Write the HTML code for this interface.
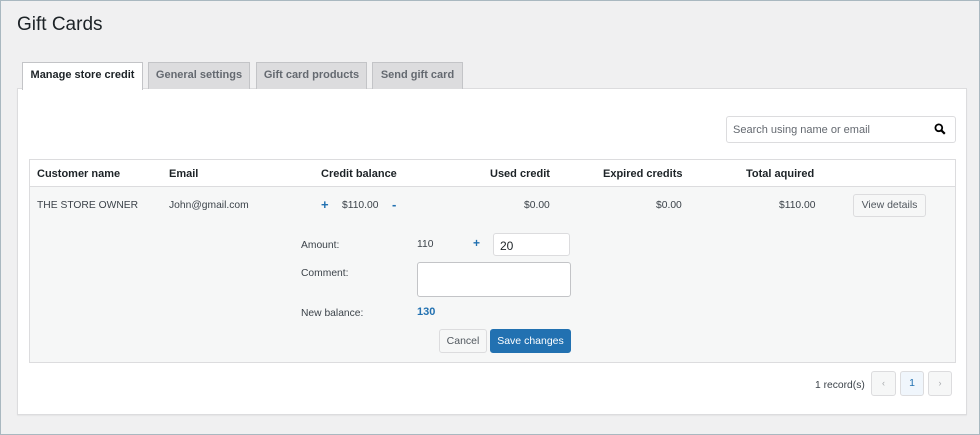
<!DOCTYPE html>
<html><head><style>
*{box-sizing:border-box;margin:0;padding:0}
body{width:980px;height:435px;background:#f0f0f1;font-family:"Liberation Sans",sans-serif;color:#3c434a;position:relative;overflow:hidden}
.a{position:absolute}
h1{position:absolute;left:17px;top:14px;font-size:19px;font-weight:400;color:#1d2327}
.tab{position:absolute;top:62px;height:27px;border:1px solid #c3c4c7;border-bottom:none;background:#dcdcde;font-size:11px;font-weight:bold;color:#646970;text-align:center;line-height:25px}
.panel{position:absolute;left:17px;top:88px;width:950px;height:327px;background:#fff;border:1px solid #dcdcde;box-shadow:0 1px 1px rgba(0,0,0,.05)}
.t{font-size:10.3px;color:#3c434a;margin-top:2px}
.th{font-size:11px;font-weight:bold;color:#1d2327;margin-top:1px}
.btn{position:absolute;border:1px solid #dcdcde;border-radius:3px;background:#f6f7f7;font-size:10.5px;color:#50575e;text-align:center}
</style></head><body>
<h1>Gift Cards</h1>
<div class="panel"></div>
<div class="tab" style="left:22px;width:121px;background:#fff;color:#1d2327;height:28px">Manage store credit</div>
<div class="tab" style="left:148px;width:102px">General settings</div>
<div class="tab" style="left:256px;width:111px">Gift card products</div>
<div class="tab" style="left:372px;width:91px">Send gift card</div>
<div class="a" style="left:726px;top:116px;width:230px;height:27px;border:1px solid #dcdcde;border-radius:3px;background:#fff"></div>
<div class="a t" style="left:733px;top:122px;color:#646970;font-size:11px">Search using name or email</div>
<svg class="a" style="left:934px;top:123px" width="12" height="12" viewBox="0 0 12 12"><circle cx="4.8" cy="4.8" r="3.4" fill="none" stroke="#000" stroke-width="1.8"/><path d="M7.3 7.3L10.8 10.8" stroke="#000" stroke-width="2.2"/></svg>
<div class="a" style="left:29px;top:159px;width:927px;height:204px;border:1px solid #dcdcde;background:#f6f7f7"></div>
<div class="a" style="left:30px;top:160px;width:925px;height:27px;background:#fff;border-bottom:1px solid #dcdcde"></div>
<div class="a th" style="left:37px;top:167px">Customer name</div>
<div class="a th" style="left:169px;top:167px">Email</div>
<div class="a th" style="left:321px;top:167px">Credit balance</div>
<div class="a th" style="left:490px;top:167px">Used credit</div>
<div class="a th" style="left:603px;top:167px">Expired credits</div>
<div class="a th" style="left:746px;top:167px">Total aquired</div>
<div class="a t" style="left:37px;top:198px">THE STORE OWNER</div>
<div class="a t" style="left:169px;top:198px">John@gmail.com</div>
<div class="a" style="left:321px;top:197px;color:#2271b1;font-weight:bold;font-size:13px">+</div>
<div class="a t" style="left:342px;top:198px">$110.00</div>
<div class="a" style="left:392px;top:197px;color:#2271b1;font-weight:bold;font-size:13px">-</div>
<div class="a t" style="left:524px;top:198px">$0.00</div>
<div class="a t" style="left:656px;top:198px">$0.00</div>
<div class="a t" style="left:779px;top:198px">$110.00</div>
<div class="btn" style="left:853px;top:194px;width:73px;height:23px;line-height:21px">View details</div>
<div class="a t" style="left:301px;top:238px">Amount:</div>
<div class="a t" style="left:417px;top:237px">110</div>
<div class="a" style="left:473px;top:236px;color:#2271b1;font-weight:bold;font-size:12px">+</div>
<div class="a" style="left:493px;top:233px;width:77px;height:23px;background:#fff;border:1px solid #dcdcde;border-radius:3px;font-size:12px;padding:5px 6px;color:#1d2327">20</div>
<div class="a t" style="left:301px;top:266px">Comment:</div>
<div class="a" style="left:417px;top:262px;width:154px;height:35px;background:#fff;border:1px solid #c3c4c7;border-radius:3px"></div>
<div class="a t" style="left:301px;top:306px">New balance:</div>
<div class="a" style="left:417px;top:306px;font-size:11px;font-weight:bold;color:#2271b1">130</div>
<div class="btn" style="left:439px;top:329px;width:48px;height:24px;line-height:22px">Cancel</div>
<div class="btn" style="left:490px;top:329px;width:81px;height:24px;line-height:22px;background:#2271b1;border-color:#2271b1;color:#fff">Save changes</div>
<div class="a t" style="left:815px;top:378px">1 record(s)</div>
<div class="btn" style="left:871px;top:371px;width:25px;height:25px;line-height:23px;color:#a7aaad;font-size:9px">‹</div>
<div class="btn" style="left:900px;top:371px;width:24px;height:25px;line-height:23px;color:#2271b1;background:#f0f6fc">1</div>
<div class="btn" style="left:928px;top:371px;width:24px;height:25px;line-height:23px;color:#a7aaad;font-size:9px">›</div>
<div class="a" style="left:0;top:0;width:980px;height:435px;border:1px solid #a9b8c0;pointer-events:none"></div>
</body></html>
